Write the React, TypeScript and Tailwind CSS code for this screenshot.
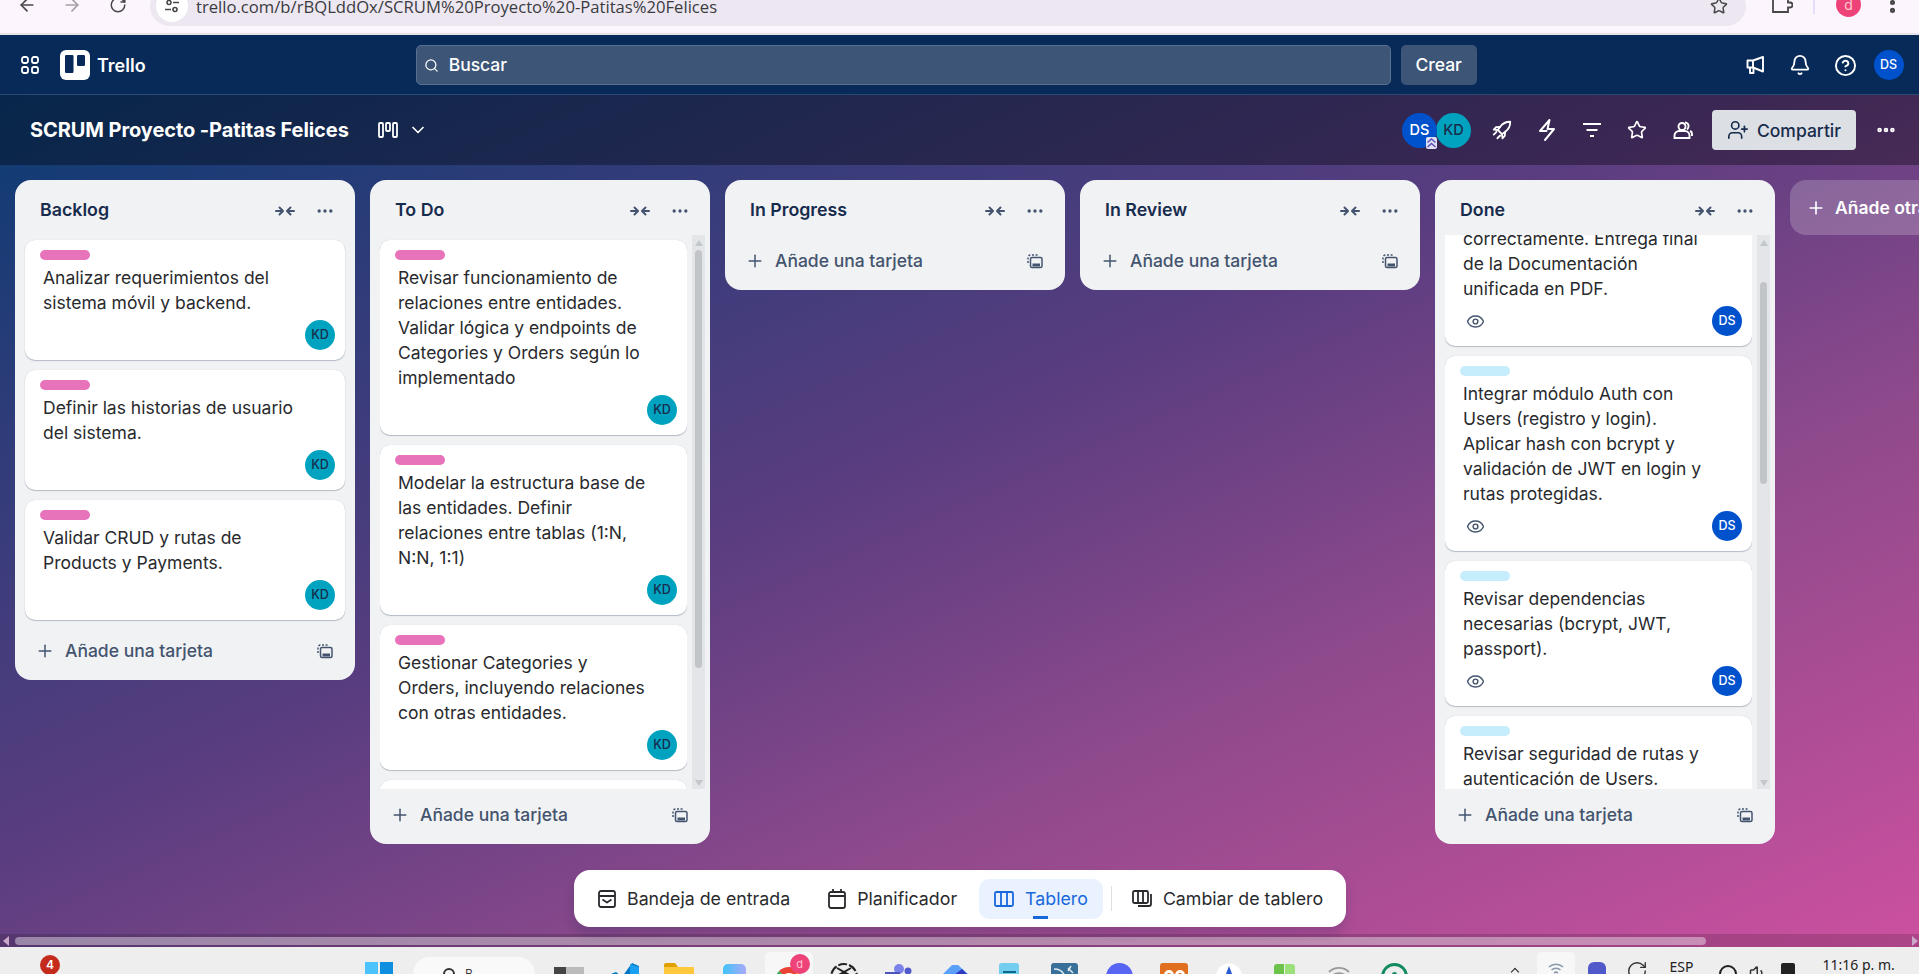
import { ArrowLeft, ArrowRight, RotateCw, Star, Search, Bell, CircleHelp, Eye, Plus, ChevronDown, Ellipsis, UserPlus, EllipsisVertical, Volume1 } from "lucide-react";

type CardData = {
  text: string;
  label: "pink" | "sky" | null;
  who?: "KD" | "DS";
  eye?: boolean;
};

const backlog: CardData[] = [
  { text: "Analizar requerimientos del sistema móvil y backend.", label: "pink", who: "KD" },
  { text: "Definir las historias de usuario del sistema.", label: "pink", who: "KD" },
  { text: "Validar CRUD y rutas de Products y Payments.", label: "pink", who: "KD" },
];

const todo: CardData[] = [
  { text: "Revisar funcionamiento de relaciones entre entidades. Validar lógica y endpoints de Categories y Orders según lo implementado", label: "pink", who: "KD" },
  { text: "Modelar la estructura base de las entidades. Definir relaciones entre tablas (1:N, N:N, 1:1)", label: "pink", who: "KD" },
  { text: "Gestionar Categories y Orders, incluyendo relaciones con otras entidades.", label: "pink", who: "KD" },
  { text: "", label: null },
];

const done: CardData[] = [
  { text: "correctamente. Entrega final de la Documentación unificada en PDF.", label: "sky", who: "DS", eye: true },
  { text: "Integrar módulo Auth con Users (registro y login). Aplicar hash con bcrypt y validación de JWT en login y rutas protegidas.", label: "sky", who: "DS", eye: true },
  { text: "Revisar dependencias necesarias (bcrypt, JWT, passport).", label: "sky", who: "DS", eye: true },
  { text: "Revisar seguridad de rutas y autenticación de Users.", label: "sky", who: "DS", eye: true },
];

function CompressIcon() {
  return (
    <svg width="20" height="14" viewBox="0 0 20 14" fill="none" stroke="#44546f" strokeWidth="2" strokeLinecap="round" strokeLinejoin="round">
      <path d="M1 7h6M4.5 3.5 8 7l-3.5 3.5M19 7h-6M15.5 3.5 12 7l3.5 3.5" />
    </svg>
  );
}

function TemplateIcon() {
  return (
    <svg width="16" height="16" viewBox="0 0 16 16" fill="none" stroke="#44546f" strokeWidth="1.5">
      <path d="M1 10V4.5A2.5 2.5 0 0 1 3.5 2H11" strokeDasharray="2 1.6" />
      <rect x="3.5" y="4.5" width="11.5" height="10" rx="1.5" />
      <rect x="5.5" y="10.5" width="7.5" height="3" fill="#44546f" stroke="none" />
    </svg>
  );
}

function Avatar({ who }: { who: "KD" | "DS" }) {
  return (
    <div className={`w-[30px] h-[30px] rounded-full flex items-center justify-center text-[12.5px] font-medium ${who === "KD" ? "bg-[#00a3bf] text-[#172b4d]" : "bg-[#0052cc] text-white"}`}>
      {who}
    </div>
  );
}

function Card({ card, className = "" }: { card: CardData; className?: string }) {
  return (
    <div className={`bg-white rounded-[10px] shadow-[0_1px_1px_#091e4240,0_0_1px_#091e4230] pt-[10px] pb-[10px] shrink-0 ${className}`}>
      {card.label && <div className={`ml-[15px] w-[50px] h-[10px] rounded-[5px] ${card.label === "sky" ? "bg-[#c6edfb]" : "bg-[#e774bb]"}`} />}
      {card.text && <p className="ml-[18px] mt-[4.5px] max-w-[252px] text-[17.5px] leading-[25px] text-[#292a2e]">{card.text}</p>}
      {card.who && (
        <div className="mt-[5.5px] mr-[10px] ml-[21px] flex items-center justify-between">
          <span>{card.eye && <Eye size={19} strokeWidth={1.8} color="#44546f" />}</span>
          <Avatar who={card.who} />
        </div>
      )}
    </div>
  );
}

function ListHeader({ title }: { title: string }) {
  return (
    <div className="h-[55px] shrink-0 flex items-center pl-[25px] pr-[20px] pt-[7px]">
      <h2 className="pb-[2px] text-[17.8px] font-semibold text-[#172b4d] flex-1">{title}</h2>
      <CompressIcon />
      <Ellipsis size={20} color="#44546f" className="ml-[20px]" />
    </div>
  );
}

function ListFooter() {
  return (
    <div className="h-[55px] shrink-0 flex items-center pl-[20px] pr-[22px] pb-[3px]">
      <Plus size={20} color="#44546f" strokeWidth={1.8} />
      <span className="ml-[10px] text-[17.5px] font-medium text-[#44546f] flex-1">Añade una tarjeta</span>
      <TemplateIcon />
    </div>
  );
}

function ScrollTrack({ thumbClass }: { thumbClass: string }) {
  return (
    <div className="relative w-[13px] ml-[5px] bg-[#e3e5e8] shrink-0">
      <span className="absolute top-[5px] left-[2.5px] w-0 h-0 border-x-[4px] border-x-transparent border-b-[6px] border-b-[#c1c7cd]" />
      <div className={`w-[7px] ml-[3px] rounded-full bg-[#c1c5c8] ${thumbClass}`} />
      <span className="absolute bottom-[3px] left-[2.5px] w-0 h-0 border-x-[4px] border-x-transparent border-t-[6px] border-t-[#c1c7cd]" />
    </div>
  );
}

function ShortList({ title, cards }: { title: string; cards: CardData[] }) {
  return (
    <section className="w-[340px] shrink-0 rounded-[16px] bg-[#f1f2f4] self-start">
      <ListHeader title={title} />
      {cards.length > 0 && (
        <div className="px-[10px] pt-[5px] pb-[5px] flex flex-col gap-[10px]">
          {cards.map((c, i) => (
            <Card key={i} card={c} />
          ))}
        </div>
      )}
      <ListFooter />
    </section>
  );
}

function ScrollList({ title, cards, thumbClass, firstClass = "" }: { title: string; cards: CardData[]; thumbClass: string; firstClass?: string }) {
  return (
    <section className="w-[340px] h-[664px] shrink-0 rounded-[16px] bg-[#f1f2f4] flex flex-col">
      <ListHeader title={title} />
      <div className="flex-1 min-h-0 flex pl-[10px] pr-[5px] overflow-hidden">
        <div className="w-[307px] pt-[5px] flex flex-col gap-[10px] overflow-hidden">
          {cards.map((c, i) => (
            <Card key={i} card={c} className={i === 0 ? firstClass : !c.text ? "h-[60px]" : ""} />
          ))}
        </div>
        <ScrollTrack thumbClass={thumbClass} />
      </div>
      <ListFooter />
    </section>
  );
}

function NavItem({ icon, label, active }: { icon: React.ReactNode; label: string; active?: boolean }) {
  return (
    <div className={`relative h-[40px] flex items-center gap-[11px] text-[17.8px] rounded-[10px] ${active ? "bg-[#e9f2fe] text-[#1868db] px-[15px]" : "text-[#292a2e]"}`}>
      {icon}
      <span className="pt-[1px]">{label}</span>
      {active && <span className="absolute bottom-0 left-[54px] w-[15px] h-[3px] bg-[#1868db]" />}
    </div>
  );
}

function Slot({ children }: { children: React.ReactNode }) {
  return <div className="w-[55px] shrink-0 flex justify-center pt-[15px]">{children}</div>;
}

export default function App() {
  return (
    <div className="w-[1919px] h-[974px] overflow-hidden flex flex-col font-['Inter',sans-serif]">
      {/* browser bar */}
      <div className="h-[35px] shrink-0 bg-[#fdf5fd] border-b-2 border-[#e8e2ea] flex items-start overflow-hidden">
        <ArrowLeft size={20} color="#474747" className="ml-[17px] -mt-[5px]" />
        <ArrowRight size={20} color="#a5a0a5" className="ml-[25px] -mt-[5px]" />
        <RotateCw size={18} color="#474747" className="ml-[27px] -mt-[4px]" />
        <div className="ml-[23px] w-[1596px] h-[40px] -mt-[14px] rounded-full bg-[#ece7f0] flex items-center pl-[6px] pr-[18px]">
          <span className="w-[32px] h-[32px] rounded-full bg-white flex items-center justify-center">
            <svg width="16" height="16" viewBox="0 0 16 16" fill="none" stroke="#474747" strokeWidth="1.6">
              <circle cx="5" cy="4.5" r="2" />
              <path d="M9 4.5h6M1 11.5h6" />
              <circle cx="11" cy="11.5" r="2" />
            </svg>
          </span>
          <span className="ml-[8px] pt-[2px] flex-1 text-[16.65px] text-[#3b3b3f] font-['Open_Sans',sans-serif]">trello.com/b/rBQLddOx/SCRUM%20Proyecto%20-Patitas%20Felices</span>
          <Star size={18} color="#474747" />
        </div>
        <svg width="22" height="16" viewBox="0 0 22 16" fill="none" stroke="#474747" strokeWidth="1.8" className="ml-[25px] -mt-[2px]">
          <path d="M2 0v14h15V9.5h2a2.5 2.5 0 0 0 0-5h-2V0" />
        </svg>
        <span className="ml-[20px] -mt-[2px] w-[2px] h-[16px] bg-[#e5defa]" />
        <span className="ml-[21px] -mt-[8px] w-[25px] h-[25px] rounded-full bg-[#ee4379] text-[#fcc] text-[14px] flex items-center justify-center">d</span>
        <EllipsisVertical size={27} strokeWidth={2.5} color="#474747" className="ml-[18px] -mt-[11px]" />
      </div>

      {/* trello nav */}
      <header className="h-[60px] shrink-0 bg-[#072a59] border-b border-[#2a4a76] flex items-center text-white pt-[1px]">
        <svg width="18" height="18" viewBox="0 0 18 18" fill="none" stroke="white" strokeWidth="1.8" className="ml-[21px]">
          <rect x="1" y="1" width="6" height="6" rx="2" />
          <rect x="11" y="1" width="6" height="6" rx="2" />
          <rect x="1" y="11" width="6" height="6" rx="2" />
          <rect x="11" y="11" width="6" height="6" rx="2" />
        </svg>
        <svg width="30" height="30" viewBox="0 0 30 30" className="ml-[21px]">
          <rect width="30" height="30" rx="6" fill="white" />
          <rect x="5" y="5" width="8.5" height="18" rx="1.2" fill="#072a59" />
          <rect x="17" y="5" width="8" height="11" rx="1.2" fill="#072a59" />
        </svg>
        <span className="ml-[7px] text-[18px] font-semibold">Trello</span>
        <div className="ml-[270px] w-[975px] h-[40px] rounded-[5px] bg-[#3d5577] border border-[#5a7090] flex items-center pl-[7px]">
          <Search size={15} color="white" />
          <span className="ml-[10px] pt-[1px] text-[17.5px] font-medium">Buscar</span>
        </div>
        <div className="ml-[10px] w-[76px] h-[40px] rounded-[5px] bg-[#3d5577] flex items-center justify-center text-[17.5px] font-medium">Crear</div>
        <svg width="20" height="20" viewBox="0 0 20 20" fill="none" stroke="white" strokeWidth="1.9" strokeLinejoin="round" className="ml-[268px]">
          <path d="M18 2 8 5.5H2.5v7H8l10 4z" />
          <path d="M5 12.5V18h3.5v-5.5M8 5.5v7" />
        </svg>
        <Bell size={22} strokeWidth={2} className="ml-[24px]" />
        <CircleHelp size={23} strokeWidth={2} className="ml-[23px]" />
        <div className="ml-[17px]"><Avatar who="DS" /></div>
      </header>

      <div className="flex-1 min-h-0 flex flex-col bg-[linear-gradient(to_bottom_right,#0c3b73,#5a3d80_45%,#8f4a8c_68%,#cc50a0)]">
        {/* board header */}
        <div className="h-[70px] shrink-0 bg-black/35 flex items-center text-white">
          <h1 className="ml-[30px] text-[20px] font-bold tracking-[-0.08px]">SCRUM Proyecto -Patitas Felices</h1>
          <svg width="20" height="16" viewBox="0 0 20 16" fill="none" stroke="white" strokeWidth="1.8" className="ml-[29px]">
            <rect x="1" y="1" width="4" height="14" rx="1" />
            <rect x="8" y="1" width="4" height="8" rx="1" />
            <rect x="15" y="1" width="4" height="14" rx="1" />
          </svg>
          <ChevronDown size={20} className="ml-[10px]" />
          <div className="ml-auto flex items-center">
            <div className="relative w-[35px] h-[35px] rounded-full bg-[#0052cc] flex items-center justify-center text-[14.5px] font-medium">
              DS
              <span className="absolute z-10 bottom-[-1px] right-0 w-[11px] h-[12px] rounded-[2px] bg-[#dfe1f7]">
                <svg width="11" height="12" viewBox="0 0 11 12" fill="none" stroke="#5e4db2" strokeWidth="1.5">
                  <path d="M1.5 5.5 5.5 2l4 3.5M1.5 10l4-3.5 4 3.5" />
                </svg>
              </span>
            </div>
            <div className="-ml-[1px] w-[35px] h-[35px] rounded-full bg-[#00a3bf] text-[#172b4d] flex items-center justify-center text-[14.5px] font-medium">KD</div>
            <svg width="22" height="22" viewBox="0 0 24 24" fill="none" stroke="white" strokeWidth="2" strokeLinejoin="round" strokeLinecap="round" className="ml-[20px]">
              <path d="M21 3c-4.5 0-8.5 2-11 5.5L7.5 12l4.5 4.5 3.5-2.5C19 11.5 21 7.5 21 3z" />
              <path d="M10 8.5 5.5 9 3 11.5l4.5 .5M15.5 14 15 18.5l-2.5 2.5-.5-4.5M3 17l3-3M7 21l3-3" />
            </svg>
            <svg width="20" height="24" viewBox="0 0 20 24" fill="none" stroke="white" strokeWidth="2" strokeLinejoin="round" strokeLinecap="round" className="ml-[24px]">
              <path d="M12.5 2 3 13h6.5M8 22l9-11h-6.5L12.5 2" />
            </svg>
            <svg width="20" height="16" viewBox="0 0 20 16" fill="none" stroke="white" strokeWidth="2" className="ml-[25px]">
              <path d="M1 2h18M4.5 8h11M8 14h4" />
            </svg>
            <Star size={20} strokeWidth={2} className="ml-[25px]" />
            <svg width="20" height="20" viewBox="0 0 20 20" fill="none" stroke="white" strokeWidth="1.9" className="ml-[26px]">
              <circle cx="9" cy="6.5" r="3.5" />
              <path d="M1.5 18v-2.5A4.5 4.5 0 0 1 6 11h6a4.5 4.5 0 0 1 4.5 4.5V18z" />
              <path d="M12 2.5a3.5 3.5 0 0 1 3.5 4c0 1.5-1 2.5-1.5 3M17 11a3 3 0 0 1 2 3v2" />
            </svg>
            <button className="ml-[19px] w-[144px] h-[40px] rounded-[4px] bg-[#dcdfe4] text-[#172b4d] flex items-center justify-center gap-[8px] text-[17.5px] font-medium">
              <UserPlus size={22} strokeWidth={1.8} />
              <span className="pt-[2px]">Compartir</span>
            </button>
            <Ellipsis size={22} strokeWidth={3} className="ml-[19px] mr-[22px]" />
          </div>
        </div>

        {/* board */}
        <div className="relative flex-1 min-h-0 flex flex-col">
          <div className="flex-1 min-h-0 flex items-start gap-[15px] pl-[15px] pt-[15px] overflow-hidden">
            <ShortList title="Backlog" cards={backlog} />
            <ScrollList title="To Do" cards={todo} thumbClass="mt-[15px] h-[418px]" />
            <ShortList title="In Progress" cards={[]} />
            <ShortList title="In Review" cards={[]} />
            <ScrollList title="Done" cards={done} thumbClass="mt-[47px] h-[202px]" firstClass="-mt-[39px]" />
            <div className="shrink-0 w-[340px] h-[55px] rounded-[16px] bg-white/20 flex items-center pl-[16px] text-white text-[17.5px] font-semibold">
              <Plus size={20} />
              <span className="ml-[9px] pt-[1px]">Añade otra lista</span>
            </div>
          </div>

          {/* bottom switcher */}
          <div className="absolute left-[574px] top-[705px] w-[772px] h-[57px] rounded-[16px] bg-white shadow-[0_8px_12px_#091e4226] flex items-center pl-[24px]">
            <NavItem label="Bandeja de entrada" icon={
              <svg width="18" height="18" viewBox="0 0 18 18" fill="none" stroke="#292a2e" strokeWidth="1.8" strokeLinejoin="round"><rect x="1" y="1" width="16" height="16" rx="2" /><path d="M1 6h16M4.5 9.5 9 12.5l4.5-3" /></svg>
            } />
            <div className="ml-[38px]">
              <NavItem label="Planificador" icon={
                <svg width="18" height="20" viewBox="0 0 18 20" fill="none" stroke="#292a2e" strokeWidth="1.8"><rect x="1" y="3" width="16" height="16" rx="2" /><path d="M1 7h16M5 0v3M13 0v3" /></svg>
              } />
            </div>
            <div className="ml-[22px]">
              <NavItem active label="Tablero" icon={
                <svg width="20" height="16" viewBox="0 0 20 16" fill="none" stroke="#1868db" strokeWidth="1.8"><rect x="1" y="1" width="18" height="14" rx="1.5" /><path d="M7 1v14M13 1v14" /></svg>
              } />
            </div>
            <span className="ml-[8px] w-px h-[25px] bg-[#dcdfe4]" />
            <div className="ml-[20px]">
              <NavItem label="Cambiar de tablero" icon={
                <svg width="20" height="18" viewBox="0 0 20 18" fill="none" stroke="#292a2e" strokeWidth="1.8"><rect x="1" y="1" width="15" height="12" rx="1.5" /><path d="M6 1v12M11 1v12M19 4v10a2 2 0 0 1-2 2H6" /></svg>
              } />
            </div>
          </div>

          {/* horizontal scrollbar */}
          <div className="h-[13px] shrink-0 bg-black/15 flex items-center pr-[1px]">
            <span className="ml-[3px] w-0 h-0 border-y-[5px] border-y-transparent border-r-[6px] border-r-[#c9a8c9]" />
            <span className="ml-[6px] w-[1691px] h-[8px] rounded-full bg-white/40" />
            <span className="ml-auto w-0 h-0 border-y-[5px] border-y-transparent border-l-[6px] border-l-[#c9a8c9]" />
          </div>
        </div>
      </div>

      {/* windows taskbar */}
      <footer className="h-[27px] shrink-0 bg-[#eeeeee] flex overflow-hidden relative">
        <span className="ml-[40px] mt-[8px] w-[20px] h-[20px] rounded-full bg-[#c42b1c] text-white text-[12px] font-semibold flex items-center justify-center shrink-0">4</span>
        <div className="ml-[305px] mt-[15px] w-[28px] h-[28px] grid grid-cols-2 gap-[2px] shrink-0">
          <span className="bg-[#4cc2ff]" /><span className="bg-[#0f8fe0]" />
        </div>
        <div className="ml-[20px] mt-[10px] w-[122px] h-[34px] rounded-full bg-[#f9f9f9] flex pl-[30px] pt-[11px] shrink-0">
          <span className="w-[12px] h-[12px] rounded-full border-2 border-[#333]" />
          <span className="ml-[10px] -mt-[3px] text-[12px] text-[#333] font-['Open_Sans',sans-serif]">B</span>
        </div>
        <div className="ml-[6.5px] flex">
          <Slot><span className="mt-[5px] w-[30px] h-[20px] bg-[linear-gradient(to_right,#444_40%,#bbb_40%)]" /></Slot>
          <Slot>
            <svg width="30" height="30" viewBox="0 0 30 30"><path d="M2 12l5-2 6 5L23 1l7 3v22l-7 3-10-12-6 5-5-2z" fill="#0078c8" /><path d="M21 2l9 3v20l-9 3V8z" fill="#1aa0f0" /></svg>
          </Slot>
          <Slot>
            <svg width="30" height="24" viewBox="0 0 30 24" className="mt-[1px]"><path d="M0 2a2 2 0 0 1 2-2h9l3 4H0z" fill="#e0a000" /><rect y="4" width="30" height="20" fill="#ffc83d" /></svg>
          </Slot>
          <Slot><span className="mt-[2px] w-[23px] h-[20px] rounded-t-[5px] bg-[linear-gradient(to_right,#3fc4f8,#a9a9f8)]" /></Slot>
          <div className="relative w-[48px] h-[30px] ml-[3px] mr-[4px] mt-[5px] rounded-[5px] bg-[#f7f7f7] shrink-0">
            <span className="absolute left-[10px] top-[15px] w-[28px] h-[28px] rounded-full border-[6px] border-t-[#ea4335] border-l-[#34a853] border-r-[#fbbc04] border-b-[#4285f4]" />
            <span className="absolute left-[25px] top-[2px] w-[20px] h-[20px] rounded-full bg-[#ee4379] text-[#ffc0d0] text-[11px] flex items-center justify-center">d</span>
          </div>
          <Slot>
            <svg width="30" height="30" viewBox="0 0 30 30" fill="none" stroke="#222" strokeWidth="2">
              <circle cx="15" cy="15" r="13" strokeDasharray="9 2" />
              <path d="M8 6l14 8v12M22 6 8 14v12" />
            </svg>
          </Slot>
          <Slot>
            <svg width="28" height="20" viewBox="0 0 28 20" className="mt-[2px]"><circle cx="14" cy="5" r="5" fill="#7b83eb" /><circle cx="23" cy="7" r="3.5" fill="#5059c9" /><rect y="8" width="15" height="12" fill="#4b53bc" /><rect x="15" y="12" width="13" height="8" fill="#7b83eb" /></svg>
          </Slot>
          <Slot>
            <svg width="28" height="20" viewBox="0 0 28 20" className="mt-[1px]"><path d="M0 14 12 2h6l10 9v3H0z" fill="#5aa0f8" /><path d="M14 12 22 6l6 6-6 6z" fill="#3038c0" /></svg>
          </Slot>
          <Slot>
            <div className="w-[20px] h-[22px] rounded-t-[3px] bg-[#72cdee] mt-[1px] flex flex-col items-center">
              <span className="mt-[8px] w-[13px] h-[2px] bg-[#0b6a8c]" />
            </div>
          </Slot>
          <Slot>
            <svg width="27" height="26" viewBox="0 0 27 26" className="mt-[1px]">
              <rect width="27" height="26" rx="3" fill="#38709a" />
              <path d="M3 6c6 0 10 3 11 9M17 5l5 5M20 3l-3 5" fill="none" stroke="#dfeaf2" strokeWidth="1.5" />
            </svg>
          </Slot>
          <Slot>
            <svg width="27" height="27" viewBox="0 0 27 27" className="mt-[1px]">
              <circle cx="13.5" cy="13.5" r="13.5" fill="#5865f2" />
              <rect x="7" y="11" width="13" height="12" rx="5" fill="white" />
            </svg>
          </Slot>
          <Slot>
            <div className="mt-[1px] w-[28px] h-[27px] rounded-[3px] bg-[#e07020] flex justify-center gap-[1px] pt-[7px]">
              <span className="w-[10px] h-[10px] rounded-full border-[3px] border-white" />
              <span className="w-[10px] h-[10px] rounded-full border-[3px] border-white" />
            </div>
          </Slot>
          <Slot>
            <svg width="26" height="27" viewBox="0 0 26 27" className="mt-[1px]">
              <circle cx="13" cy="13.5" r="13" fill="white" />
              <path d="M13 3 8 16h10z" fill="#2a5bd0" />
              <path d="M8 16h10v8H8z" fill="#55a868" />
            </svg>
          </Slot>
          <Slot>
            <div className="mt-[2px] w-[21px] h-[24px] grid grid-cols-2 grid-rows-[10px_1fr] gap-[1px] rounded-[3px] overflow-hidden">
              <span className="bg-[#6cc24a]" /><span className="bg-[#9be07a]" />
              <span className="bg-[#3f9a36]" /><span className="bg-[#12491f]" />
            </div>
          </Slot>
          <Slot>
            <svg width="24" height="24" viewBox="0 0 24 24" fill="none" stroke="#999" strokeWidth="1.8" className="mt-[1px]">
              <path d="M2 9a14 14 0 0 1 20 0M5 13a10 10 0 0 1 14 0M8 17a6 6 0 0 1 8 0" />
            </svg>
          </Slot>
          <Slot><span className="mt-[1px] w-[27px] h-[27px] rounded-full border-[3px] border-[#128c5e] flex justify-center"><span className="mt-[6px] w-[5px] h-[12px] rounded-full bg-[#128c5e]" /></span></Slot>
        </div>
        <span className="ml-[90px] mt-[22px] w-[6px] h-[6px] rotate-45 border-l border-t border-[#222] shrink-0" />
        <div className="ml-[19px] mt-[5px] w-[38px] h-[30px] rounded-[5px] bg-[#f7f7f7] flex justify-center pt-[10px] shrink-0">
          <svg width="16" height="14" viewBox="0 0 16 14" fill="none" stroke="#8a98a8" strokeWidth="1.5">
            <path d="M1 5a10 10 0 0 1 14 0M3.5 8a6.5 6.5 0 0 1 9 0M6 11a3 3 0 0 1 4 0" />
          </svg>
        </div>
        <span className="ml-[13px] mt-[15px] w-[18px] h-[14px] rounded-t-[6px] bg-[#5059c9] shrink-0" />
        <RotateCw size={22} color="#333" strokeWidth={1.5} className="ml-[20px] mt-[13px] shrink-0" />
        <span className="ml-[22px] mt-[10px] text-[14px] leading-[20px] text-[#222] font-['Noto_Sans',sans-serif]">ESP</span>
        <span className="ml-[26px] mt-[18px] w-[18px] h-[18px] rounded-full border-2 border-[#222] shrink-0" />
        <Volume1 size={18} color="#333" className="ml-[12px] mt-[17px] shrink-0" />
        <span className="ml-[14px] mt-[16px] w-[14px] h-[14px] rounded-[2px] bg-[#222] shrink-0" />
        <span className="ml-[27px] mt-[8px] text-[14px] leading-[20px] text-[#222] font-['Noto_Sans',sans-serif] whitespace-nowrap">11:16 p. m.</span>
      </footer>
    </div>
  );
}
